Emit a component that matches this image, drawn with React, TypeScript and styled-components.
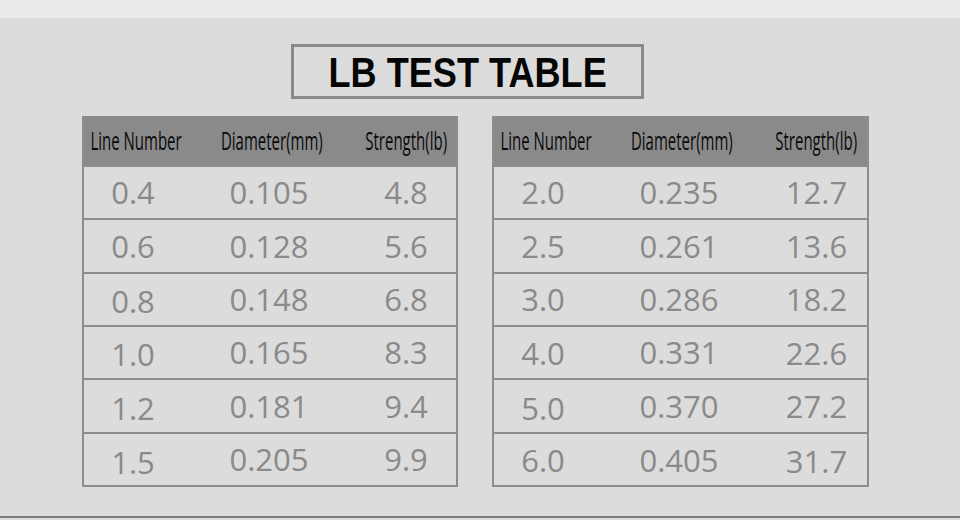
import React from "react";
import styled, { createGlobalStyle } from "styled-components";

const Global = createGlobalStyle`
  html, body { margin: 0; padding: 0; background: #dcdcdc; }
  body { font-family: "Open Sans", "Liberation Sans", sans-serif; }
`;

const Page = styled.div`
  width: 960px;
  height: 520px;
  display: flex;
  flex-direction: column;
  background: #dcdcdc;
  overflow: hidden;
`;

const TopBand = styled.div`
  height: 18px;
  flex: none;
  background: #ebebeb;
`;

const Main = styled.div`
  height: 500px;
  flex: none;
  box-sizing: border-box;
  border-bottom: 2px solid #7a7a7a;
  display: flex;
  flex-direction: column;
  padding: 26px 0 0 82px;
`;

const TitleBox = styled.div`
  width: 353px;
  height: 55px;
  box-sizing: border-box;
  margin-left: 209px;
  border: 3px solid #8a8a8a;
  display: flex;
  align-items: center;
  justify-content: center;
`;

const TitleText = styled.h1`
  margin: 0;
  display: inline-block;
  white-space: nowrap;
  font-family: "Liberation Sans", sans-serif;
  font-weight: 700;
  font-size: 43px;
  line-height: 1;
  color: #050505;
  transform: scaleX(0.84);
  transform-origin: center;
  margin-top: 1px;
`;

const Tables = styled.div`
  display: flex;
  gap: 34px;
  margin-top: 17px;
`;

const Table = styled.div<{ $w: number }>`
  width: ${(p) => p.$w}px;
  box-sizing: border-box;
  border: 2px solid #8d8d8d;
  display: flex;
  flex-direction: column;
`;

const HeadRow = styled.div`
  height: 47px;
  background: #8a8a8a;
  display: grid;
  grid-template-columns: 98px 174px minmax(0, 1fr);
`;

const HeadCell = styled.div<{ $dx: number }>`
  min-width: 0;
  display: flex;
  align-items: center;
  justify-content: center;
  padding-left: ${(p) => p.$dx * 2}px;
`;

const HeadLabel = styled.span`
  display: inline-block;
  flex: none;
  white-space: nowrap;
  font-family: "Open Sans", sans-serif;
  font-weight: 500;
  font-size: 25px;
  color: #0a0a0a;
  transform: scaleX(0.6);
  transform-origin: center;
  line-height: 1;
  margin-top: -2px;
`;

const Row = styled.div<{ $h: number }>`
  height: ${(p) => p.$h}px;
  box-sizing: border-box;
  border-top: 2px solid #8d8d8d;
  display: grid;
  grid-template-columns: 98px 174px minmax(0, 1fr);
`;

const Cell = styled.div<{ $dy: number }>`
  min-width: 0;
  display: flex;
  align-items: center;
  justify-content: center;
  font-family: "Open Sans", sans-serif;
  font-size: 31px;
  color: #8a8a8a;
  line-height: 1;
  padding-top: ${(p) => p.$dy * 2}px;
`;

const heights = [53, 54, 53, 53, 54, 53];

type TableData = { rows: string[][]; dy: number[][] };

const left: TableData = {
  rows: [
    ["0.4", "0.105", "4.8"],
    ["0.6", "0.128", "5.6"],
    ["0.8", "0.148", "6.8"],
    ["1.0", "0.165", "8.3"],
    ["1.2", "0.181", "9.4"],
    ["1.5", "0.205", "9.9"],
  ],
  dy: [
    [0, 0, 0],
    [0, 0, 0],
    [2, 0, 0],
    [2, 0, 0],
    [2, 0, 0],
    [3, 0, 0],
  ],
};

const right: TableData = {
  rows: [
    ["2.0", "0.235", "12.7"],
    ["2.5", "0.261", "13.6"],
    ["3.0", "0.286", "18.2"],
    ["4.0", "0.331", "22.6"],
    ["5.0", "0.370", "27.2"],
    ["6.0", "0.405", "31.7"],
  ],
  dy: [
    [0, 0, 0],
    [0, 0, 0],
    [0, 0, 0],
    [1, 0, 1],
    [2, 0, 0],
    [1, 1, 2],
  ],
};

const headers = ["Line Number", "Diameter(mm)", "Strength(lb)"];
const headerDx = [3, 3, 0];

function DataTable({ data, width }: { data: TableData; width: number }) {
  return (
    <Table $w={width}>
      <HeadRow>
        {headers.map((h, i) => (
          <HeadCell key={h} $dx={headerDx[i]}>
            <HeadLabel>{h}</HeadLabel>
          </HeadCell>
        ))}
      </HeadRow>
      {data.rows.map((r, ri) => (
        <Row key={ri} $h={heights[ri]}>
          {r.map((v, ci) => (
            <Cell key={ci} $dy={data.dy[ri][ci]}>
              {v}
            </Cell>
          ))}
        </Row>
      ))}
    </Table>
  );
}

export default function App() {
  return (
    <>
      <Global />
      <Page>
        <TopBand />
        <Main>
          <TitleBox>
            <TitleText>LB TEST TABLE</TitleText>
          </TitleBox>
          <Tables>
            <DataTable data={left} width={376} />
            <DataTable data={right} width={377} />
          </Tables>
        </Main>
      </Page>
    </>
  );
}
